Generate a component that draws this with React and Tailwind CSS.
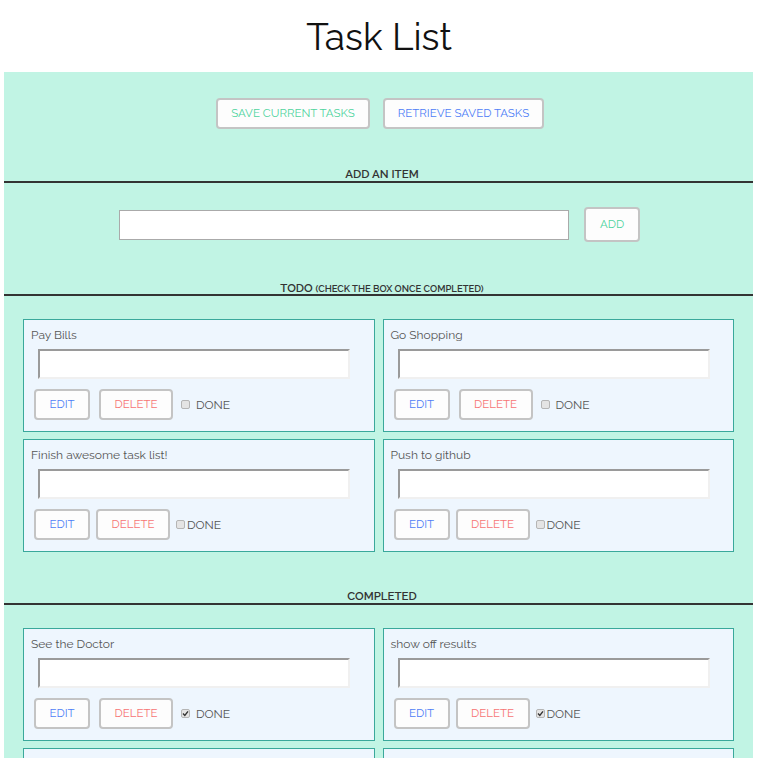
const todos = [
  { text: 'Pay Bills', tight: false },
  { text: 'Go Shopping', tight: false },
  { text: 'Finish awesome task list!', tight: true },
  { text: 'Push to github', tight: true },
]

const completed = [
  { text: 'See the Doctor', tight: false },
  { text: 'show off results', tight: true },
]

function Btn({ color, className = '', children }) {
  return (
    <button className={`h-[31px] rounded-[4px] border-2 border-[#c4c4c4] bg-[#fdfdfd] text-[11.5px] uppercase leading-none ${color} ${className}`}>
      {children}
    </button>
  )
}

function Check({ checked }) {
  return (
    <span className="w-[9px] h-[9px] rounded-[2px] border border-[#b5b5b5] bg-[#e4e4e4] flex items-center justify-center">
      {checked && (
        <svg width="7" height="7" viewBox="0 0 7 7">
          <path d="M1 3.6 L2.8 5.4 L6 1.4" fill="none" stroke="#333" strokeWidth="1.4" />
        </svg>
      )}
    </span>
  )
}

function Card({ item, checked }) {
  return (
    <div className="h-[113px] border border-[#3aa89b] bg-[#eef6fe] pt-[8px] pl-[7px]">
      <div className="h-[14px] text-[12px] leading-[14px] text-[#555]">{item.text}</div>
      <div className="mt-[7px] ml-[7px] w-[312px] h-[30px] bg-white border-2 border-t-[#9a9a9a] border-l-[#9a9a9a] border-r-[#f0f0f0] border-b-[#f0f0f0]" />
      <div className="mt-[10px] ml-[3px] flex items-center">
        <Btn color="text-[#4d7ef7]" className="w-[56px]">Edit</Btn>
        <Btn color="text-[#f77474]" className={`w-[74px] ${item.tight ? 'ml-[6px]' : 'ml-[9px]'}`}>Delete</Btn>
        <span className={item.tight ? 'ml-[6px]' : 'ml-[8px]'}>
          <Check checked={checked} />
        </span>
        <span className={`text-[12px] text-[#555] leading-none ${item.tight ? 'ml-[2px]' : 'ml-[6px]'}`}>DONE</span>
      </div>
    </div>
  )
}

function Header({ children, className = '' }) {
  return (
    <div className={`border-b-2 border-[#333] pb-[1px] pl-[7px] text-center h-[15px] leading-[12px] text-[#333] font-semibold ${className}`}>
      {children}
    </div>
  )
}

export default function App() {
  return (
    <div className="w-[758px] h-[758px] overflow-hidden bg-white font-['Raleway','Inter',sans-serif]">
      <h1 className="h-[72px] flex items-center justify-center text-[37px] text-[#111] pt-[3px]">Task List</h1>

      <div className="ml-[4px] w-[749px] bg-[#c1f4e4] pb-[40px]">
        <div className="pt-[26px] flex justify-center gap-[13px] pl-[3px]">
          <Btn color="text-[#4fd49d]" className="w-[154px]">Save current tasks</Btn>
          <Btn color="text-[#4d7ef7]" className="w-[161px]">Retrieve saved tasks</Btn>
        </div>

        <Header className="mt-[39px] text-[11.5px]">ADD AN ITEM</Header>

        <div className="mt-[24px] flex items-center justify-center gap-[15px] pl-[2px]">
          <div className="w-[450px] h-[30px] bg-white border border-[#aaa]" />
          <Btn color="text-[#4fd49d]" className="w-[56px] h-[35px]">Add</Btn>
        </div>

        <Header className="mt-[39px]">
          <span className="text-[11.5px]">TODO </span>
          <span className="text-[9.5px]">(CHECK THE BOX ONCE COMPLETED)</span>
        </Header>

        <div className="mt-[23px] px-[19px] grid grid-cols-2 gap-x-[8px] gap-y-[7px]">
          {todos.map((t, i) => (
            <Card key={i} item={t} checked={false} />
          ))}
        </div>

        <Header className="mt-[38px] text-[11.5px]">COMPLETED</Header>

        <div className="mt-[23px] px-[19px] grid grid-cols-2 gap-x-[8px] gap-y-[7px]">
          {completed.map((t, i) => (
            <Card key={i} item={t} checked={true} />
          ))}
          <div className="h-[113px] border border-[#3aa89b] bg-[#eef6fe]" />
          <div className="h-[113px] border border-[#3aa89b] bg-[#eef6fe]" />
        </div>
      </div>
    </div>
  )
}
